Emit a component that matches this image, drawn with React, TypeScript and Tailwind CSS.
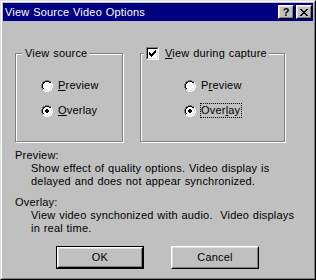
import React from "react";

const COLORS: Record<string, string> = {
  g: "#808080",
  k: "#000000",
  l: "#dfdfdf",
  w: "#ffffff",
  f: "#ffffff",
};

function Pixels({ map, x = 0, y = 0 }: { map: string[]; x?: number; y?: number }) {
  const rects: React.ReactNode[] = [];
  map.forEach((row, ry) => {
    row.split("").forEach((c, rx) => {
      const fill = COLORS[c];
      if (fill) rects.push(<rect key={`${rx}-${ry}`} x={x + rx} y={y + ry} width={1} height={1} fill={fill} />);
    });
  });
  return <>{rects}</>;
}

const RADIO = [
  "....gggg....",
  "..ggkkkkgg..",
  ".gkkffffkkw.",
  ".gkfffffflw.",
  "gkfffffffflw",
  "gkfffffffflw",
  "gkfffffffflw",
  "gkfffffffflw",
  ".gkfffffflw.",
  ".gllffffllw.",
  "..wwllllww..",
  "....wwww....",
];

const DOT = ["....", ".kk.", "kkkk", "kkkk", ".kk."];

const CHECK = [
  "......k",
  ".....kk",
  "k...kkk",
  "kk.kkk.",
  "kkkkk..",
  ".kkk...",
  "..k....",
];

const CLOSE = [
  "kk....kk",
  ".kk..kk.",
  "..kkkk..",
  "...kk...",
  "..kkkk..",
  ".kk..kk.",
  "kk....kk",
];

function Radio({ checked }: { checked?: boolean }) {
  return (
    <svg width={12} height={12} viewBox="0 0 12 12" shapeRendering="crispEdges" className="shrink-0 block">
      <Pixels map={RADIO} />
      {checked && <Pixels map={DOT} x={4} y={3} />}
    </svg>
  );
}

function Checkbox() {
  return (
    <div className="w-[13px] h-[13px] shrink-0 border border-t-[#808080] border-l-[#808080] border-r-white border-b-white">
      <div className="w-full h-full border border-t-black border-l-black border-r-[#dfdfdf] border-b-[#dfdfdf] bg-white">
        <svg width={9} height={9} viewBox="0 0 9 9" shapeRendering="crispEdges" className="block">
          <Pixels map={CHECK} x={1} y={1} />
        </svg>
      </div>
    </div>
  );
}

function CapBtn({ children }: { children: React.ReactNode }) {
  return (
    <div className="w-[16px] h-[14px] border border-t-white border-l-white border-r-black border-b-black bg-[#c0c0c0]">
      <div className="w-full h-full border border-t-[#dfdfdf] border-l-[#dfdfdf] border-r-[#808080] border-b-[#808080] flex items-center justify-center">
        {children}
      </div>
    </div>
  );
}

function RadioRow({ label, checked, focus, u }: { label: string; checked?: boolean; focus?: boolean; u: number }) {
  return (
    <div className="flex items-start">
      <Radio checked={checked} />
      <span
        className={
          "ml-[4px] -mt-[2px] border pr-px whitespace-pre " +
          (focus ? "border-dotted border-black" : "border-transparent")
        }
      >
        {label.slice(0, u)}
        <span className="underline underline-offset-[1px]">{label[u]}</span>
        {label.slice(u + 1)}
      </span>
    </div>
  );
}

export default function App() {
  return (
    <div className="w-[316px] h-[280px] bg-[#c0c0c0] border border-t-[#dfdfdf] border-l-[#dfdfdf] border-r-black border-b-black text-[11px] leading-[13px] text-black tracking-[0.2px] [word-spacing:0.5px] font-['Liberation_Sans',Arial,sans-serif]">
      <div className="h-full border border-t-white border-l-white border-r-[#808080] border-b-[#808080] p-px flex flex-col">
        <div className="h-[18px] shrink-0 bg-[#000080] flex items-center pl-[2px] pr-px">
          <span className="text-white leading-[18px]">View Source Video Options</span>
          <div className="ml-auto flex gap-[2px]">
            <CapBtn>
              <span className="font-bold text-[11px] leading-[10px] text-black tracking-normal">?</span>
            </CapBtn>
            <CapBtn>
              <svg width={8} height={7} viewBox="0 0 8 7" shapeRendering="crispEdges" className="block">
                <Pixels map={CLOSE} />
              </svg>
            </CapBtn>
          </div>
        </div>

        <div className="flex-1 pl-[12px] pt-[32px] flex flex-col">
          <div className="flex gap-[17px]">
            <div className="relative w-[108px] h-[89px] border border-[#808080] shadow-[inset_1px_1px_0_#fff,1px_1px_0_#fff] pl-[25px] pt-[26px]">
              <span className="absolute left-[6px] top-[-7px] bg-[#c0c0c0] pl-[3px] pr-[2px]">View source</span>
              <div className="flex flex-col gap-[12px]">
                <RadioRow label="Preview" u={0} />
                <RadioRow label="Overlay" u={0} checked />
              </div>
            </div>
            <div className="relative w-[145px] h-[89px] border border-[#808080] shadow-[inset_1px_1px_0_#fff,1px_1px_0_#fff] pl-[43px] pt-[26px]">
              <div className="absolute left-[3px] top-[-7px] bg-[#c0c0c0] pl-[2px] pr-[2px] flex items-center h-[13px]">
                <Checkbox />
                <span className="ml-[6px] whitespace-pre">
                  <span className="underline underline-offset-[1px]">V</span>iew during capture
                </span>
              </div>
              <div className="flex flex-col gap-[12px]">
                <RadioRow label="Preview" u={1} />
                <RadioRow label="Overlay" u={4} checked focus />
              </div>
            </div>
          </div>

          <div className="mt-[7px]">
            <p>Preview:</p>
            <p className="pl-[16px]">
              Show effect of quality options. Video display is
              <br />
              delayed and does not appear synchronized.
            </p>
            <p className="mt-[8px]">Overlay:</p>
            <p className="pl-[16px] whitespace-pre">{"View video synchonized with audio.  Video displays\nin real time."}</p>
          </div>

          <div className="mt-[11px] ml-[41px] flex gap-[27px]">
            <div className="w-[88px] h-[23px] border border-black">
              <div className="w-full h-full border border-t-white border-l-white border-r-black border-b-black">
                <div className="w-full h-full border border-t-[#dfdfdf] border-l-[#dfdfdf] border-r-[#808080] border-b-[#808080] flex items-center justify-center">
                  OK
                </div>
              </div>
            </div>
            <div className="w-[88px] h-[23px] border border-t-white border-l-white border-r-black border-b-black">
              <div className="w-full h-full border border-t-[#dfdfdf] border-l-[#dfdfdf] border-r-[#808080] border-b-[#808080] flex items-center justify-center">
                Cancel
              </div>
            </div>
          </div>
        </div>
      </div>
    </div>
  );
}
